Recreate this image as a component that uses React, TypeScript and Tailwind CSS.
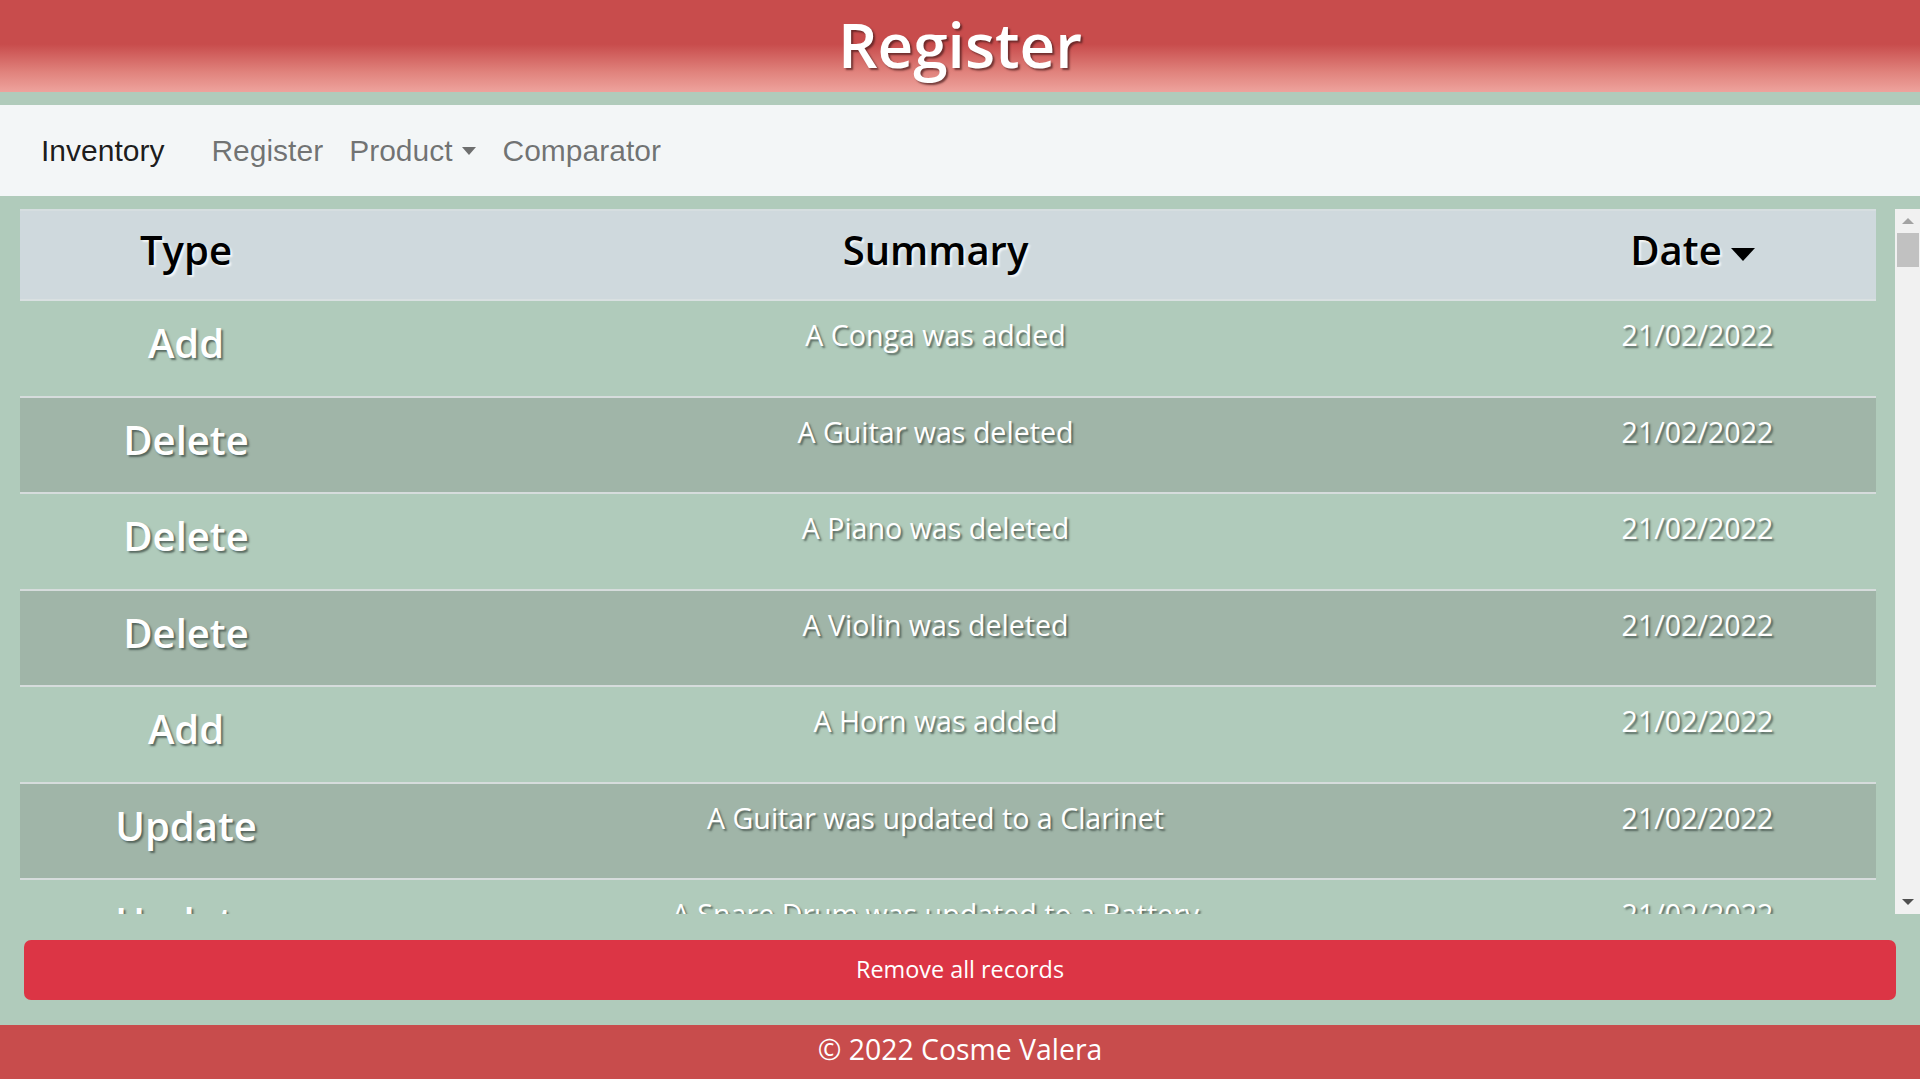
const records = [
  { type: "Add", summary: "A Conga was added", date: "21/02/2022" },
  { type: "Delete", summary: "A Guitar was deleted", date: "21/02/2022" },
  { type: "Delete", summary: "A Piano was deleted", date: "21/02/2022" },
  { type: "Delete", summary: "A Violin was deleted", date: "21/02/2022" },
  { type: "Add", summary: "A Horn was added", date: "21/02/2022" },
  { type: "Update", summary: "A Guitar was updated to a Clarinet", date: "21/02/2022" },
  { type: "Update", summary: "A Snare Drum was updated to a Battery", date: "21/02/2022" },
  { type: "Add", summary: "A Flute was added", date: "20/02/2022" },
];

const sans = "font-['Open_Sans','Noto_Sans',sans-serif]";

function Scrollbar() {
  return (
    <div className="w-[25px] bg-[#f1f1f1] flex flex-col items-center">
      <div className="h-[24px] w-full flex items-center justify-center">
        <div className="w-0 h-0 border-x-[6px] border-x-transparent border-b-[6px] border-b-[#a3a3a3]" />
      </div>
      <div className="w-[22px] h-[34px] bg-[#c1c1c1]" />
      <div className="flex-1" />
      <div className="h-[24px] w-full flex items-center justify-center">
        <div className="w-0 h-0 border-x-[6px] border-x-transparent border-t-[6px] border-t-[#505050]" />
      </div>
    </div>
  );
}

export default function App() {
  return (
    <div className={`h-screen flex flex-col bg-[#b0cbbb] ${sans}`}>
      <header className="h-[92px] shrink-0 flex items-center justify-center bg-[linear-gradient(to_bottom,#c84c4c_0%,#c84c4c_48%,#e0827c_78%,#eea39d_100%)]">
        <h1 className="text-[62px] font-semibold text-white leading-none pb-[4px] [text-shadow:2px_2px_2px_rgba(70,25,25,0.7)]">
          Register
        </h1>
      </header>

      <div className="h-[13px] shrink-0" />

      <nav className="h-[91px] shrink-0 bg-[#f3f6f7] flex items-center pl-[41px] font-['Liberation_Sans',Arial,sans-serif] text-[30px]">
        <span className="text-black/90 mr-[47px]">Inventory</span>
        <span className="text-black/55 mr-[26px]">Register</span>
        <span className="text-black/55 flex items-center mr-[27px]">
          Product
          <span className="ml-[9px] w-0 h-0 border-x-[7.5px] border-x-transparent border-t-[8px] border-t-black/55" />
        </span>
        <span className="text-black/55">Comparator</span>
      </nav>

      <main className="flex-1 flex flex-col pt-[13px] min-h-0">
        <div className="flex-1 flex min-h-0">
          <div className="flex-1 pl-[20px] pr-[19px] overflow-hidden">
            <div className="border-t-2 border-[#d6dee0]">
              <div className="flex h-[90px] bg-[#cfd9dd] border-b-2 border-[#d9e0e1] text-[40px] font-semibold text-black [text-shadow:2px_2px_2px_rgba(255,255,255,0.8)]">
                <div className="w-[332px] flex items-center justify-center pb-[10px]">Type</div>
                <div className="w-[1167px] flex items-center justify-center pb-[10px]">Summary</div>
                <div className="flex-1 flex items-center justify-center pb-[10px] pr-[10px]">
                  Date
                  <span className="ml-[9px] mt-[8px] w-0 h-0 border-x-[12px] border-x-transparent border-t-[13px] border-t-black" />
                </div>
              </div>
              {records.map((r, i) => (
                <div
                  key={i}
                  className={`flex h-[96.5px] border-b-2 border-[#d6dcdc] text-white [text-shadow:2px_2px_2px_rgba(60,75,68,0.75)] ${
                    i % 2 === 1 ? "bg-[#a0b5a8]" : ""
                  }`}
                >
                  <div className="w-[332px] flex items-center justify-center pb-[10px] text-[40px] font-semibold">
                    {r.type}
                  </div>
                  <div className="w-[1167px] text-center pt-[13px] text-[28.6px] leading-[1.5]">{r.summary}</div>
                  <div className="flex-1 text-center pt-[13px] text-[28.6px] leading-[1.5]">{r.date}</div>
                </div>
              ))}
            </div>
          </div>
          <Scrollbar />
        </div>

        <div className="h-[26px] shrink-0" />
        <button className="mx-[24px] h-[60px] shrink-0 rounded-[7px] bg-[#dc3545] text-white text-[23.4px]">
          Remove all records
        </button>
        <div className="h-[25px] shrink-0" />
      </main>

      <footer className="h-[54px] shrink-0 bg-[#c84c4c] flex items-center justify-center pb-[6px] text-white text-[28.4px]">
        © 2022 Cosme Valera
      </footer>
    </div>
  );
}
